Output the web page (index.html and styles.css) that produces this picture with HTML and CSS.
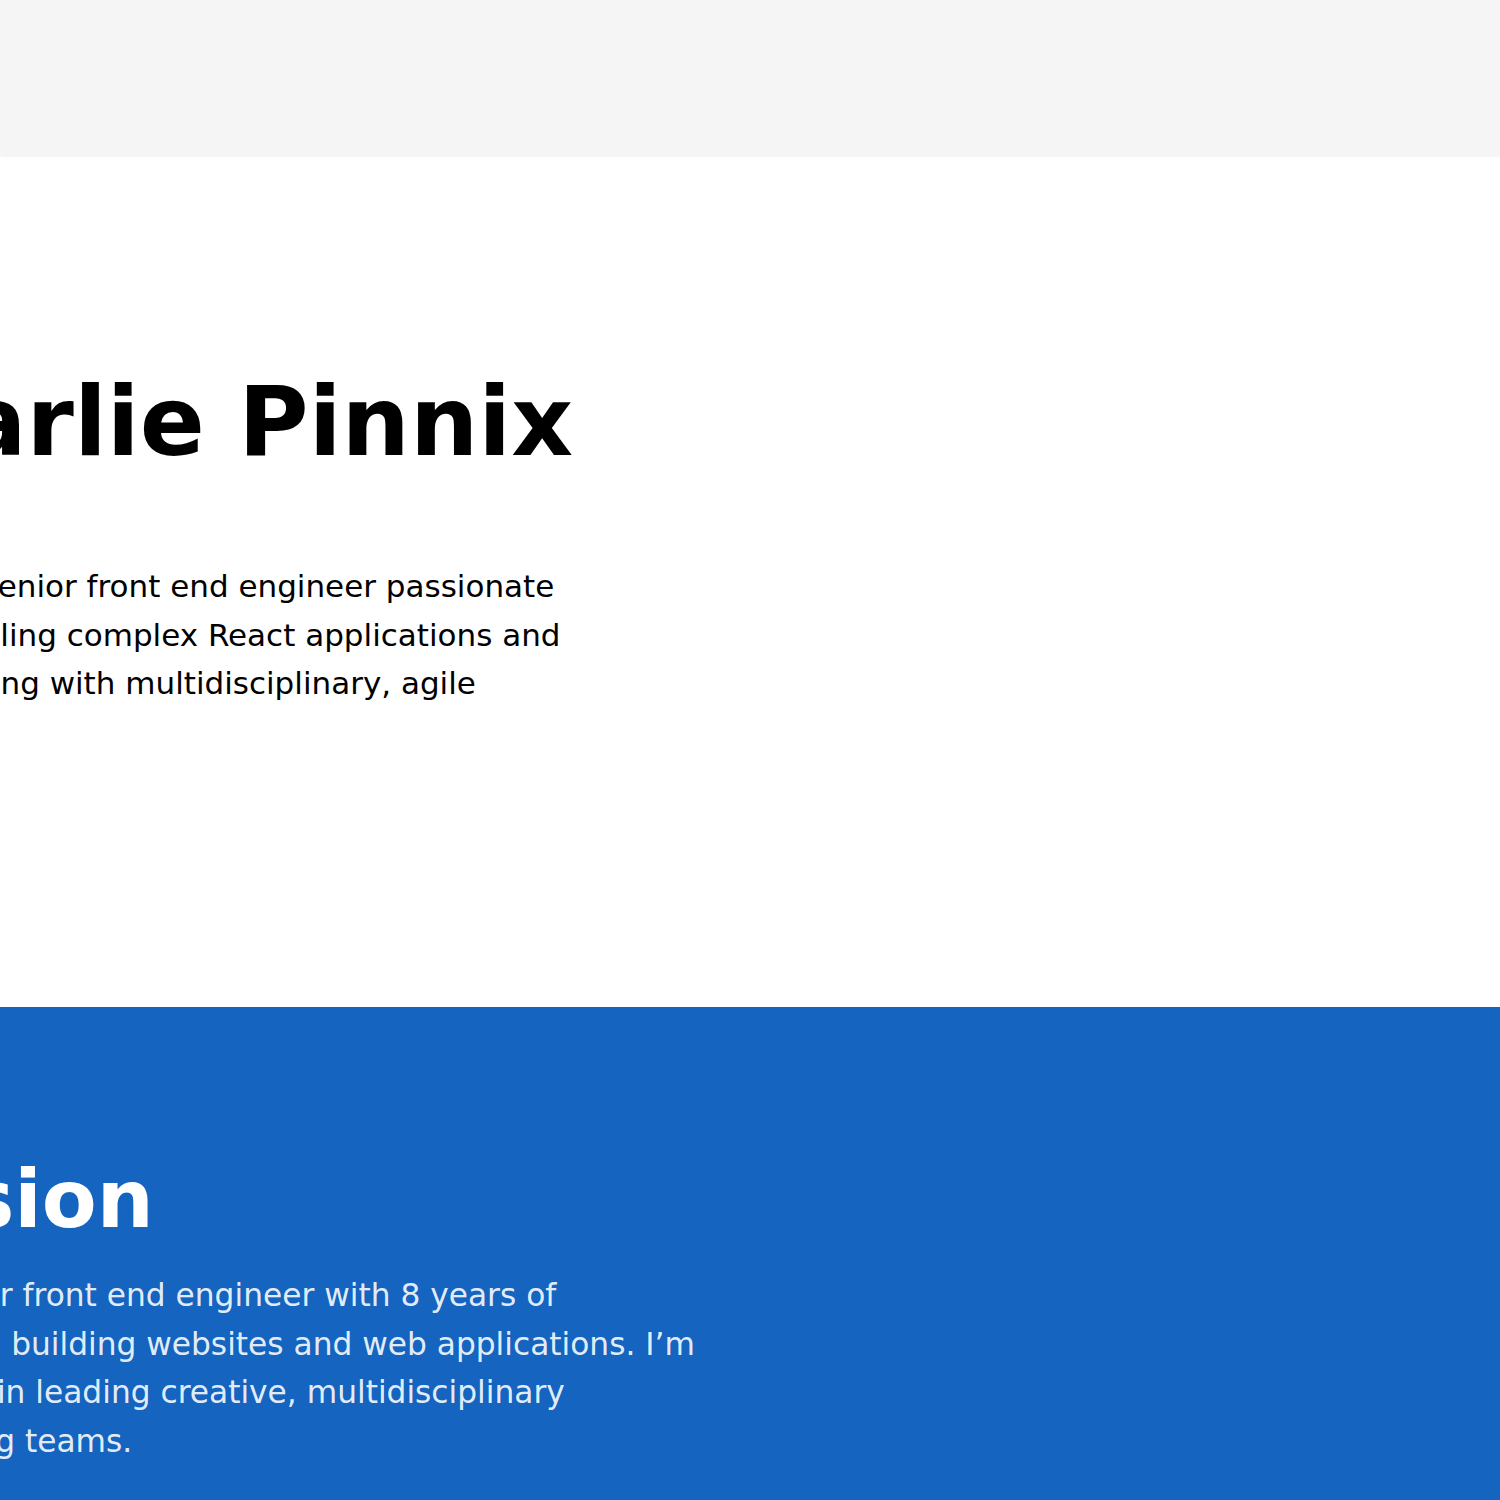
FILE: index.html
```html
<!DOCTYPE html>
<html lang="en">
<head>
<meta charset="utf-8">
<title>Charlie Pinnix</title>
<link rel="stylesheet" href="styles.css">
</head>
<body>
  <header class="topbar"></header>
  <main>
    <section class="hero">
      <div class="hero-content">
        <h1 class="hero-title">Charlie Pinnix</h1>
        <p class="hero-text">Hi, I am a senior front end engineer passionate about handling complex React applications and I love working with multidisciplinary, agile teams.</p>
      </div>
    </section>
    <section class="mission">
      <div class="mission-content">
        <h2 class="mission-title">Mission</h2>
        <p class="mission-text">I’m a senior front end engineer with 8 years of experience building websites and web applications. I’m interested in leading creative, multidisciplinary engineering teams.</p>
      </div>
    </section>
  </main>
</body>
</html>
```

FILE: styles.css
```css
html, body {
  margin: 0;
  padding: 0;
  background: #ffffff;
  font-family: "DejaVu Sans", Verdana, sans-serif;
  overflow-x: hidden;
}

.topbar {
  height: 155px;
  background: #f5f5f5;
  box-shadow: 0 1px 3px rgba(0, 0, 0, 0.08);
  position: relative;
  z-index: 1;
}

.hero {
  background: #ffffff;
  height: 852px;
  box-sizing: border-box;
  padding-top: 210px;
}

.hero-content {
  margin-left: -177px;
  max-width: 750px;
}

.hero-title {
  margin: 0;
  font-size: 96px;
  line-height: 1.2;
  font-weight: 700;
  color: #000;
  white-space: nowrap;
}

.hero-text {
  margin: 82px 0 0;
  font-size: 31px;
  line-height: 48.5px;
  color: #000;
}

.mission {
  background: #1565c0;
  min-height: 493px;
  box-sizing: border-box;
  padding-top: 145px;
}

.mission-content {
  margin-left: -172px;
  max-width: 885px;
}

.mission-title {
  margin: 0 0 0 -16px;
  font-size: 80px;
  line-height: 1.2;
  font-weight: 700;
  color: #ffffff;
}

.mission-text {
  margin: 23px 0 0;
  font-size: 31.25px;
  line-height: 48.5px;
  color: rgba(255, 255, 255, 0.9);
}
```
